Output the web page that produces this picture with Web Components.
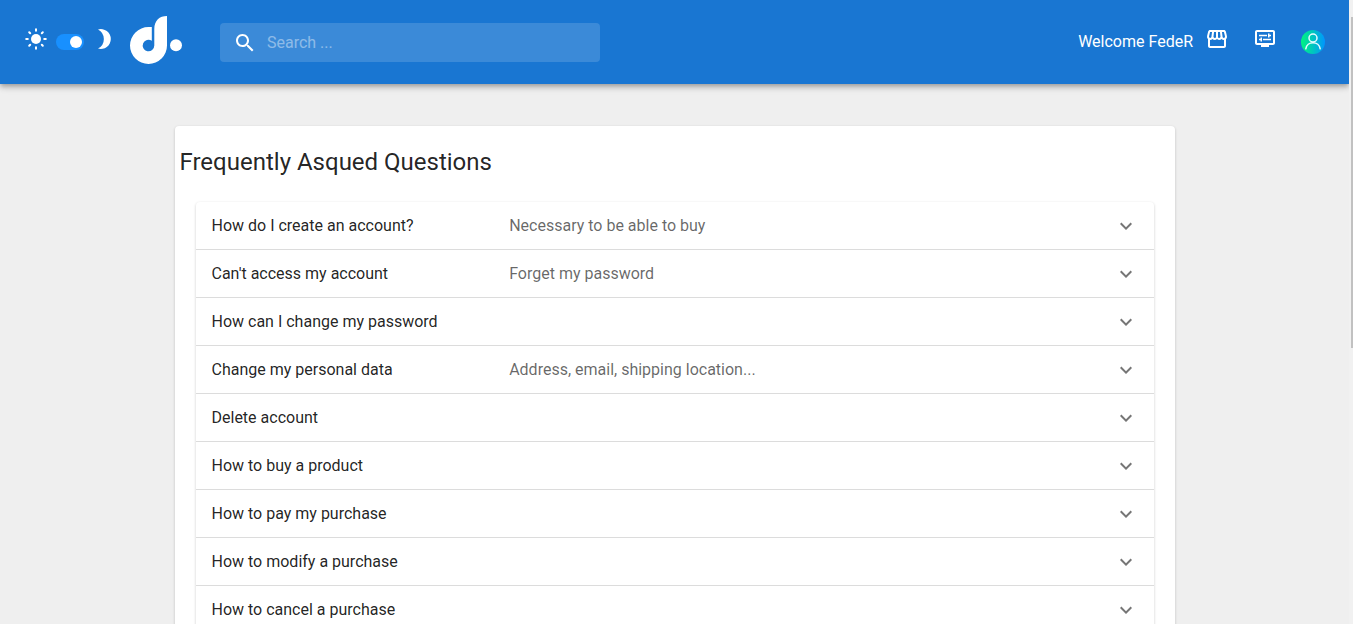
<!DOCTYPE html>
<html lang="en">
<head>
<meta charset="utf-8">
<meta name="viewport" content="width=device-width, initial-scale=1">
<title>Frequently Asqued Questions</title>
<style>
  html { scrollbar-width: none; }
  body {
    margin: 0;
    background: #efefef;
    color: rgba(0, 0, 0, .87);
    font: 400 16px/24px Roboto, "Liberation Sans", sans-serif;
  }
</style>
</head>
<body>
<app-shell>
  <app-header slot="header" user="FedeR"></app-header>
  <faq-card heading="Frequently Asqued Questions">
    <faq-item note="Necessary to be able to buy">How do I create an account?</faq-item>
    <faq-item note="Forget my password">Can't access my account</faq-item>
    <faq-item>How can I change my password</faq-item>
    <faq-item note="Address, email, shipping location...">Change my personal data</faq-item>
    <faq-item>Delete account</faq-item>
    <faq-item>How to buy a product</faq-item>
    <faq-item>How to pay my purchase</faq-item>
    <faq-item>How to modify a purchase</faq-item>
    <faq-item>How to cancel a purchase</faq-item>
  </faq-card>
</app-shell>

<script>
class BaseElement extends HTMLElement {
  render(html) {
    if (!this.shadowRoot) this.attachShadow({ mode: 'open' });
    this.shadowRoot.innerHTML = html;
  }
}

const ICONS = {
  sun: '<circle cx="12" cy="12" r="5"/><path fill="none" stroke="currentColor" stroke-width="2" stroke-linecap="round" d="M12 2.2v1.6M12 20.2v1.6M2.2 12h1.6M20.2 12h1.6M5.2 5.2l1 1M17.8 17.8l1 1M18.8 5.2l-1 1M6.2 17.8l-1 1"/>',
  moon: '<path d="M6 2.4A10 10 0 1 1 6 21.6A10.8 10.8 0 0 0 6 2.4z"/>',
  search: '<path d="M15.5 14h-.79l-.28-.27C15.41 12.59 16 11.11 16 9.5 16 5.91 13.09 3 9.5 3S3 5.91 3 9.5 5.91 16 9.5 16c1.61 0 3.09-.59 4.23-1.57l.27.28v.79l5 4.99L20.49 19l-4.99-5zm-6 0C7.01 14 5 11.99 5 9.5S7.01 5 9.5 5 14 7.01 14 9.5 11.99 14 9.5 14z"/>',
  store: '<path d="M21.9 8.89l-1.05-4.37c-.22-.9-1-1.52-1.91-1.52H5.05c-.9 0-1.69.63-1.9 1.52L2.1 8.89c-.24 1.02-.02 2.06.62 2.88.08.11.19.19.28.29V19c0 1.1.9 2 2 2h14c1.1 0 2-.9 2-2v-6.94c.09-.09.2-.18.28-.28.64-.82.87-1.87.62-2.89zm-2.99-3.9l1.05 4.37c.1.42.01.84-.25 1.17-.14.18-.44.47-.94.47-.61 0-1.14-.49-1.21-1.14L16.98 5l1.93-.01zM13 5h1.96l.54 4.52c.05.39-.07.78-.33 1.07-.22.26-.54.41-.95.41-.67 0-1.22-.59-1.22-1.31V5zM8.49 9.52L9.04 5H11v4.69c0 .72-.55 1.31-1.29 1.31-.34 0-.65-.15-.89-.41-.25-.29-.37-.68-.33-1.07zm-4.45-.16L5.05 5h1.97l-.58 4.86c-.08.65-.6 1.14-1.21 1.14-.49 0-.8-.29-.93-.47-.27-.32-.36-.75-.26-1.17zM5 19v-6.03c.08.01.15.03.23.03.87 0 1.66-.36 2.24-.95.6.6 1.4.95 2.31.95.87 0 1.65-.36 2.23-.93.59.57 1.39.93 2.29.93.84 0 1.64-.35 2.24-.95.58.59 1.37.95 2.24.95.08 0 .15-.02.23-.03V19H5z"/>',
  display: '<path d="M20 3H4c-1.1 0-2 .9-2 2v11c0 1.1.9 2 2 2h4v2h8v-2h4c1.1 0 2-.9 2-2V5c0-1.1-.9-2-2-2zm0 13H4V5h16v11z"/><path d="M6 7.75h8v1.5H6zM16.5 9.25H18v-1.5h-1.5V6.500H15v4h1.5zM10 11.75h8v1.5h-8zM7.5 14.5H9v-4H7.5v1.25H6v1.5h1.5z"/>',
  chevron: '<path d="M16.59 8.59L12 13.17 7.41 8.59 6 10l6 6 6-6z"/>',
  avatar: '<defs><linearGradient id="g"><stop stop-color="#00f57f"/><stop offset="1" stop-color="#0095ff"/></linearGradient></defs><circle cx="12" cy="12" r="12" fill="url(#g)"/><g fill="none" stroke="#e6fbff" stroke-width="1.5" stroke-linecap="round"><circle cx="12" cy="8" r="4"/><path d="M4.8 18.8a7.3 7.3 0 0 1 14.4 0"/></g>'
};

customElements.define('app-icon', class extends BaseElement {
  connectedCallback() {
    this.render(`
      <style>
        :host { display: block; flex: none; width: 24px; height: 24px; }
        svg { display: block; width: 100%; height: 100%; }
      </style>
      <svg viewBox="0 0 24 24" fill="currentColor" aria-hidden="true">${ICONS[this.getAttribute('name')]}</svg>`);
  }
});

customElements.define('app-logo', class extends BaseElement {
  connectedCallback() {
    this.render(`
      <style>
        :host { display: block; flex: none; }
        a { display: block; color: inherit; }
        svg { display: block; width: 52px; height: 48px; }
      </style>
      <a href="#" aria-label="Home"><svg viewBox="0 0 52 48" fill="currentColor" aria-hidden="true">
        <path d="M37 0V29.5A18.5 18.5 0 1 1 18.5 11H21.8V24.7A5.8 5.8 0 1 0 24.3 29.5V13C24.3 4.5 29.5 0 37 0z"/>
        <circle cx="46" cy="29.3" r="6"/>
      </svg></a>`);
  }
});

customElements.define('theme-switch', class extends BaseElement {
  connectedCallback() {
    this.render(`
      <style>
        :host { display: flex; align-items: center; gap: 8px; }
        app-icon { margin-bottom: 6px; }
        input {
          appearance: none; display: flex; box-sizing: border-box; margin: 0;
          width: 28px; height: 16px; padding: 2px; border-radius: 8px;
          background: rgba(0, 0, 0, .25); cursor: pointer;
        }
        input::before { content: ""; width: 12px; height: 12px; border-radius: 50%; background: #fff; }
        input:checked { background: #1890ff; justify-content: flex-end; }
      </style>
      <app-icon name="sun"></app-icon>
      <input type="checkbox" role="switch" aria-label="Dark theme" checked>
      <app-icon name="moon"></app-icon>`);
  }
});

customElements.define('search-box', class extends BaseElement {
  connectedCallback() {
    this.render(`
      <style>
        :host { display: block; }
        label {
          display: flex; align-items: center; height: 39px; box-sizing: border-box;
          padding: 1px 13px 0; gap: 10px; border-radius: 4px;
          background: rgba(255, 255, 255, .15);
        }
        input {
          flex: 1; min-width: 0; padding: 0; border: 0; outline: 0;
          background: none; color: inherit; font: inherit;
        }
        input::placeholder { color: inherit; opacity: .42; }
      </style>
      <label><app-icon name="search"></app-icon><input type="search" placeholder="Search ..." aria-label="Search"></label>`);
  }
});

customElements.define('app-header', class extends BaseElement {
  connectedCallback() {
    this.render(`
      <style>
        :host {
          display: flex; align-items: center; box-sizing: border-box;
          min-height: 84px; padding: 0 24px; color: #fff; background: #1976d2;
          box-shadow: 0 2px 4px -1px rgba(0,0,0,.2), 0 4px 5px 0 rgba(0,0,0,.14), 0 1px 10px 0 rgba(0,0,0,.12);
        }
        app-logo { margin: 0 38px 4px 14px; }
        search-box { flex: 0 1 380px; }
        nav { display: flex; align-items: center; gap: 24px; margin-left: auto; }
        .user { display: flex; align-items: center; gap: 12px; white-space: nowrap; }
        button { display: block; padding: 0; border: 0; background: none; color: inherit; cursor: pointer; }
        .tool { margin-bottom: 6px; }
      </style>
      <theme-switch></theme-switch>
      <app-logo></app-logo>
      <search-box></search-box>
      <nav>
        <div class="user"><span>Welcome ${this.getAttribute('user')}</span>
          <button class="tool" aria-label="Store"><app-icon name="store"></app-icon></button></div>
        <button class="tool" aria-label="Settings"><app-icon name="display"></app-icon></button>
        <button aria-label="Account"><app-icon name="avatar"></app-icon></button>
      </nav>`);
  }
});

customElements.define('faq-item', class extends BaseElement {
  connectedCallback() {
    this.render(`
      <style>
        :host { display: block; }
        :host(:not(:last-child)) { border-bottom: 1px solid #dcdcdc; }
        :host(:not(:last-child)) button { min-height: 47px; }
        button {
          display: flex; align-items: center; width: 100%; min-height: 48px;
          padding: 0 16px; border: 0; background: none; color: inherit;
          font: inherit; text-align: left; cursor: pointer;
        }
        .text { flex: 1; display: flex; }
        .question { flex: 0 0 33%; }
        .note { color: rgba(0, 0, 0, .6); }
        app-icon { color: rgba(0, 0, 0, .54); }
      </style>
      <button aria-expanded="false">
        <span class="text"><span class="question"><slot></slot></span><span class="note">${this.getAttribute('note') || ''}</span></span>
        <app-icon name="chevron"></app-icon>
      </button>`);
  }
});

customElements.define('faq-card', class extends BaseElement {
  connectedCallback() {
    this.render(`
      <style>
        :host {
          display: block; box-sizing: border-box; width: 100%; max-width: 1000px;
          padding: 20px 5px; border-radius: 4px; background: #fff;
          box-shadow: 0 1px 3px rgba(0, 0, 0, .2);
        }
        h1 { margin: 0 0 24px; font-size: 24px; line-height: 32px; font-weight: 400; }
        .list {
          margin: 0 16px; border-radius: 4px; background: #fff;
          box-shadow: 0 1px 3px rgba(0, 0, 0, .2);
        }
      </style>
      <h1>${this.getAttribute('heading')}</h1>
      <div class="list"><slot></slot></div>`);
  }
});

customElements.define('scroll-rail', class extends BaseElement {
  connectedCallback() {
    this.render(`
      <style>
        :host {
          position: fixed; inset: 0 0 0 auto; width: 4px; box-sizing: border-box;
          display: flex; flex-direction: column;
          padding: 17px 0 0 2px; background: #f1f1f1;
        }
        .thumb { flex: 6; background: #c1c1c1; }
        .rest { flex: 5; }
      </style>
      <div class="thumb"></div><div class="rest"></div>`);
  }
});

customElements.define('app-shell', class extends BaseElement {
  connectedCallback() {
    this.render(`
      <style>
        :host { display: block; padding-right: 4px; }
        main { display: flex; justify-content: center; padding: 42px 16px; }
      </style>
      <slot name="header"></slot>
      <main><slot></slot></main>
      <scroll-rail aria-hidden="true"></scroll-rail>`);
  }
});
</script>
</body>
</html>
